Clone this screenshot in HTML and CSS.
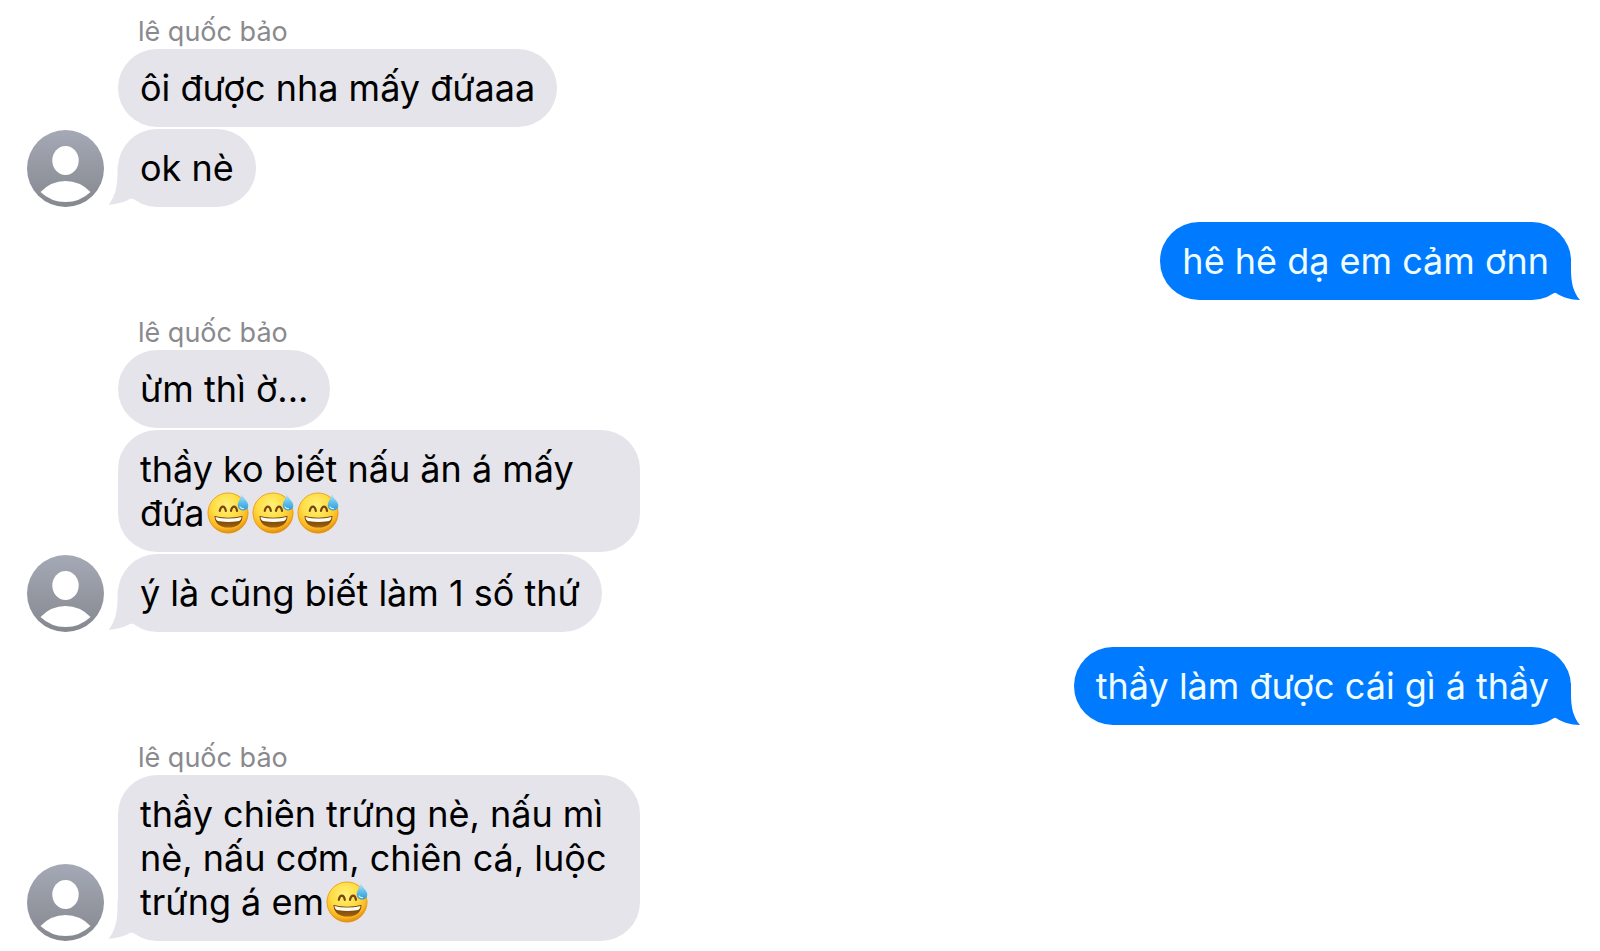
FILE: index.html
```
<!DOCTYPE html>
<html lang="vi">
<head>
    <meta charset="UTF-8">
    <meta name="viewport" content="width=device-width, initial-scale=1.0">
    <title>Tin nhắn</title>
    <link rel="stylesheet" href="styles.css">
</head>
<body>

    <!-- Shared shapes -->
    <svg class="shapes" width="0" height="0" aria-hidden="true">
        <defs>
            <linearGradient id="avatarFill" x1="0" y1="0" x2="0" y2="1">
                <stop offset="0" stop-color="#a5a9b6"/>
                <stop offset="1" stop-color="#85888e"/>
            </linearGradient>
            <radialGradient id="faceFill" cx="0.45" cy="0.32" r="0.68">
                <stop offset="0" stop-color="#fff27a"/>
                <stop offset="0.5" stop-color="#ffdc43"/>
                <stop offset="0.82" stop-color="#fbb722"/>
                <stop offset="1" stop-color="#e0880f"/>
            </radialGradient>
            <linearGradient id="dropFill" x1="0" y1="0" x2="0" y2="1">
                <stop offset="0" stop-color="#c3e8f8"/>
                <stop offset="0.5" stop-color="#63c0ec"/>
                <stop offset="1" stop-color="#2e9bd6"/>
            </linearGradient>
            <linearGradient id="mouthFill" x1="0" y1="0" x2="0" y2="1">
                <stop offset="0" stop-color="#5d3207"/>
                <stop offset="1" stop-color="#a3640f"/>
            </linearGradient>
        </defs>
        <symbol id="avatar" viewBox="0 0 77 77">
            <circle cx="38.5" cy="38.5" r="38.5" fill="url(#avatarFill)"/>
            <ellipse cx="38.5" cy="30.5" rx="13.2" ry="14.5" fill="#fff"/>
            <path d="M13.5 62Q24 51 38.5 51T63.5 62Q53 72 38.5 72T13.5 62Z" fill="#fff"/>
        </symbol>
        <symbol id="sweat" viewBox="0 0 42 42">
            <circle cx="21" cy="21" r="20.3" fill="url(#faceFill)"/>
            <circle cx="21" cy="21" r="20" fill="none" stroke="#e39a1c" stroke-width="0.8"/>
            <path d="M12.8 18.8C13.4 16 14.5 14.6 15.900 14.600S18.300 16 18.800 18.800M24 18.800C24.600 16 25.700 14.600 27.100 14.600S29.500 16 30 18.800" fill="none" stroke="#7a450c" stroke-width="2.2" stroke-linecap="round"/>
            <path d="M7.500 24Q21 27.600 35.500 24C35.300 31 30.500 35.600 21.500 35.600S7.800 31 7.500 24Z" fill="url(#mouthFill)"/>
            <path d="M8.400 24.900Q21 28.200 34.600 24.900C34.400 27.600 33 29 30.500 29.300Q21.500 30.600 12.500 29.300C10 29 8.700 27.600 8.400 24.900Z" fill="#fffdf2"/>
            <path d="M34.800 2C36.300 6.500 41.300 9.500 41.300 13.500C41.300 16.500 39 18.500 36.100 18.500S30.700 16.500 30.700 13.500C30.700 9.500 34 6.500 34.800 2Z" fill="url(#dropFill)"/>
            <path d="M33 15q1.300 1.900 3.500 1.600" fill="none" stroke="#d9f3fd" stroke-width="1.2" stroke-linecap="round"/>
        </symbol>
        <symbol id="tailIn" viewBox="0 0 40 46">
            <path d="M11 0L9.600 6C9.600 22 9 33 .700 43.700C9 43 17 41 22 37.700L30 38L38 12Z"/>
        </symbol>
        <symbol id="tailOut" viewBox="0 0 40 46">
            <path d="M31 4V15C31 28 33 38 40 46C30 46 22 43 16 39L10 38L4 12Z"/>
        </symbol>
    </svg>

    <main class="chat">
        <section class="group received">
            <svg class="avatar" role="img" aria-label="lê quốc bảo"><use href="#avatar"/></svg>
            <div class="messages">
                <div class="sender">lê quốc bảo</div>
                <div class="bubble">ôi được nha mấy đứaaa</div>
                <div class="bubble">ok nè<svg class="tail" aria-hidden="true"><use href="#tailIn"/></svg></div>
            </div>
        </section>

        <section class="group sent">
            <div class="messages">
                <div class="bubble">hê hê dạ em cảm ơnn<svg class="tail" aria-hidden="true"><use href="#tailOut"/></svg></div>
            </div>
        </section>

        <section class="group received">
            <svg class="avatar" role="img" aria-label="lê quốc bảo"><use href="#avatar"/></svg>
            <div class="messages">
                <div class="sender">lê quốc bảo</div>
                <div class="bubble">ừm thì ờ...</div>
                <div class="bubble">thầy ko biết nấu ăn á mấy đứa<svg class="emoji" role="img" aria-label="😅"><use href="#sweat"/></svg><svg class="emoji" role="img" aria-label="😅"><use href="#sweat"/></svg><svg class="emoji" role="img" aria-label="😅"><use href="#sweat"/></svg></div>
                <div class="bubble">ý là cũng biết làm 1 số thứ<svg class="tail" aria-hidden="true"><use href="#tailIn"/></svg></div>
            </div>
        </section>

        <section class="group sent">
            <div class="messages">
                <div class="bubble">thầy làm được cái gì á thầy<svg class="tail" aria-hidden="true"><use href="#tailOut"/></svg></div>
            </div>
        </section>

        <section class="group received">
            <svg class="avatar" role="img" aria-label="lê quốc bảo"><use href="#avatar"/></svg>
            <div class="messages">
                <div class="sender">lê quốc bảo</div>
                <div class="bubble">thầy chiên trứng nè, nấu mì nè, nấu cơm, chiên cá, luộc trứng á em<svg class="emoji" role="img" aria-label="😅"><use href="#sweat"/></svg><svg class="tail" aria-hidden="true"><use href="#tailIn"/></svg></div>
            </div>
        </section>
    </main>

</body>
</html>
```

FILE: styles.css
```
* {
    box-sizing: border-box;
}

body {
    margin: 0;
    background-color: #fff;
    font-family: Inter, "Noto Sans", sans-serif;
    font-size: 36px;
    line-height: 44px;
}

.shapes {
    position: absolute;
}

.chat {
    display: flex;
    flex-direction: column;
    gap: 15px;
    padding: 14px 29px 10px 27px;
}

.group {
    display: flex;
    align-items: flex-end;
    gap: 14px;
}

.sent {
    justify-content: flex-end;
}

.avatar {
    flex: none;
    width: 77px;
    height: 77px;
}

.messages {
    display: flex;
    flex-direction: column;
    align-items: flex-start;
    gap: 2px;
}

.sender {
    height: 33px;
    padding-left: 20px;
    color: #8a8a8e;
    font-size: 27px;
    line-height: 36px;
}

.bubble {
    position: relative;
    isolation: isolate;
    max-width: 522px;
    padding: 17px 22px;
    border-radius: 39px;
    background-color: #e5e4ea;
    color: #000;
}

.sent .bubble {
    background-color: #007aff;
    color: #f0fdff;
}

/* Bubble tails, kept behind the text */
.tail {
    position: absolute;
    z-index: -1;
    bottom: 0;
    left: -10px;
    width: 40px;
    height: 46px;
    fill: #e5e4ea;
}

.sent .tail {
    right: -9px;
    left: auto;
    fill: #007aff;
}

.emoji {
    width: 42px;
    height: 42px;
    margin: 0 1px 0 2px;
    vertical-align: -8px;
}
```
